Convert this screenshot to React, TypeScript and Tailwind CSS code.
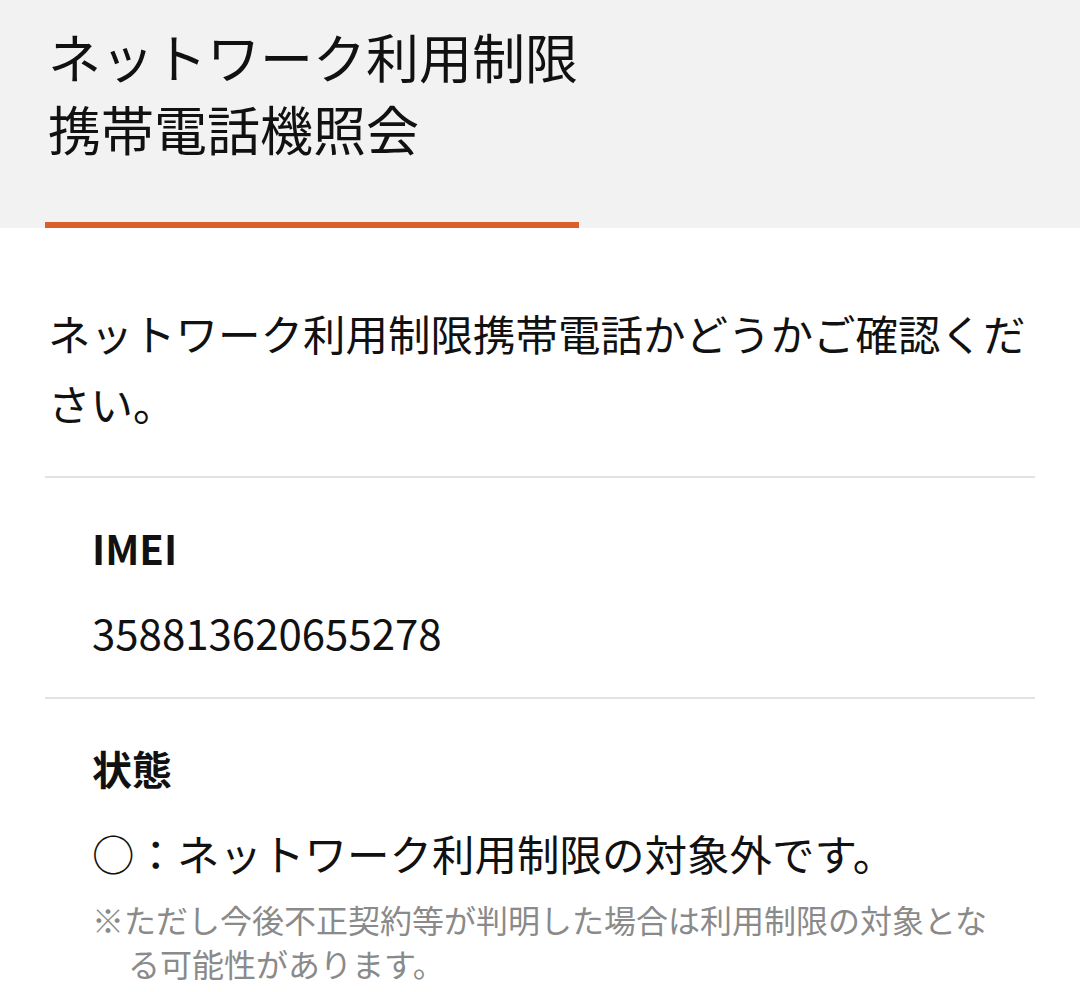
import React from "react";

export default function App() {
  const font = { fontFamily: '"Noto Sans CJK JP", "Noto Sans", sans-serif' };
  return (
    <div className="w-[1080px] h-[992px] bg-white overflow-hidden text-[#111]" style={font}>
      <div className="bg-[#f2f2f2] h-[228px] pl-[48px] pt-[20px] relative">
        <h1 className="text-[53px] leading-[72px] font-normal tracking-[0px]">
          ネットワーク利用制限
          <br />
          携帯電話機照会
        </h1>
        <div className="absolute left-[45px] top-[222px] w-[534px] h-[6px] bg-[#d9602a]" />
      </div>
      <div className="px-[45px]">
        <p className="pl-[3px] pt-[70px] text-[42.5px] leading-[70px]">
          ネットワーク利用制限携帯電話かどうかご確認ください。
        </p>
        <div className="mt-[38px] h-[2px] bg-[#e2e2e2]" />
        <div className="pl-[47px] pt-[45px] pb-[40px]">
          <div className="text-[40px] leading-[50px] font-bold">IMEI</div>
          <div className="mt-[34px] text-[42px] leading-[50px]">358813620655278</div>
        </div>
        <div className="h-[2px] bg-[#e2e2e2]" />
        <div className="pl-[47px] pt-[44px]">
          <div className="text-[40px] leading-[50px] font-bold">状態</div>
          <div className="mt-[35px] text-[42.5px] leading-[50px]">○：ネットワーク利用制限の対象外です。</div>
          <p className="mt-[19px] text-[32px] leading-[44px] text-[#8a8a8a] pl-[36px] -indent-[36px] pr-[40px]">
            ※ただし今後不正契約等が判明した場合は利用制限の対象となる可能性があります。
          </p>
        </div>
      </div>
    </div>
  );
}
